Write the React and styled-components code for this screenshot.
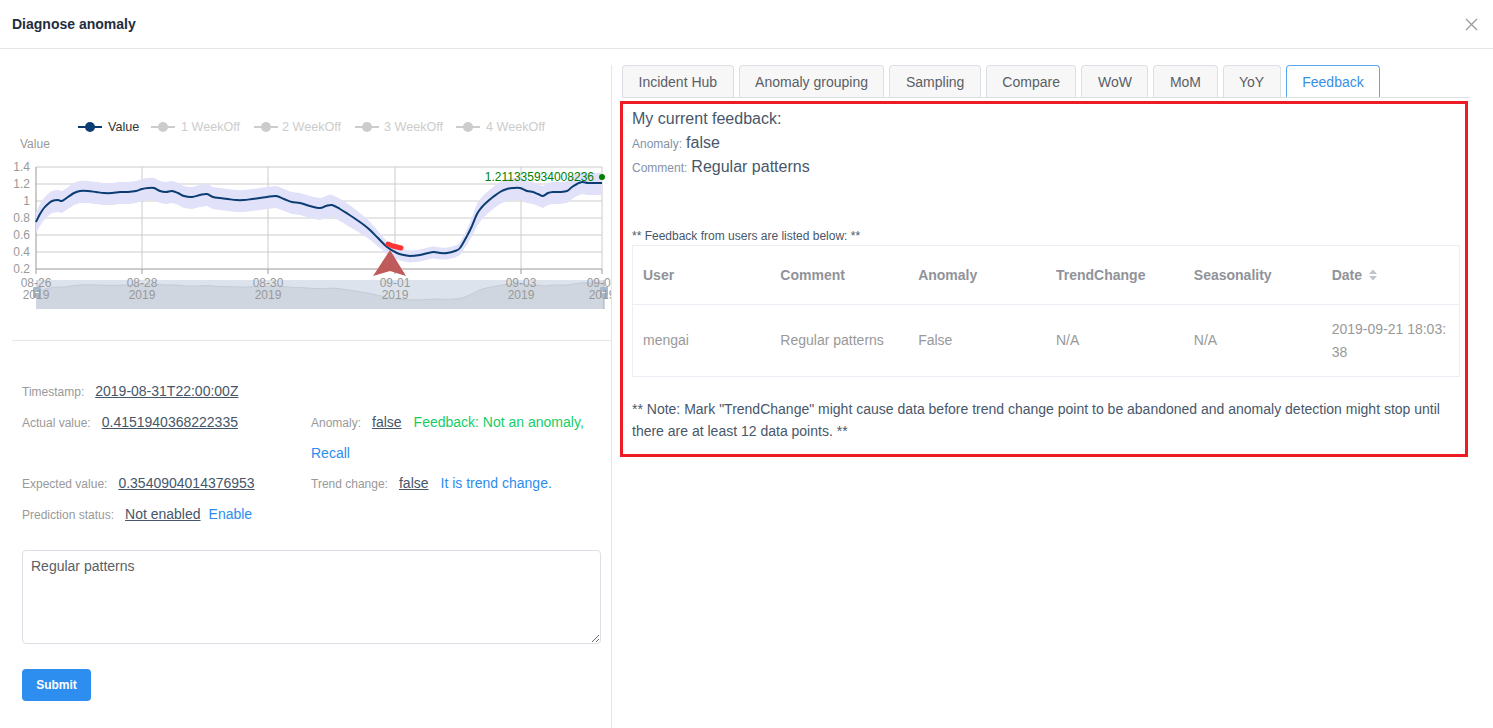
import React from 'react';
import styled, { createGlobalStyle } from 'styled-components';

const GlobalStyle = createGlobalStyle`
  body {
    margin: 0;
    background: #fff;
    font-family: "Liberation Sans", Arial, sans-serif;
  }
`;

const Dialog = styled.div`
  width: 1493px;
  height: 728px;
  overflow: hidden;
  background: #fff;
`;

const Header = styled.div`
  height: 48px;
  display: flex;
  align-items: center;
  justify-content: space-between;
  padding: 0 15px 0 12px;
  border-bottom: 1px solid #e6e6e6;
`;

const Title = styled.span`
  font-size: 14px;
  font-weight: 700;
  color: #1f2d3d;
`;

const Body = styled.div`
  display: grid;
  grid-template-columns: 611px 1fr;
  padding-top: 16px;
  height: 663px;
`;

const LeftPane = styled.div`
  display: flex;
  flex-direction: column;
`;

const ChartBox = styled.div`
  margin-top: 40px;
  height: 210px;
  svg {
    display: block;
  }
`;

const Divider = styled.div`
  margin: 25px 0 0 12px;
  height: 1px;
  background: #e6e6e6;
`;

const InfoGrid = styled.div`
  margin-top: 35px;
  padding-left: 22px;
  display: grid;
  grid-template-columns: 289px 290px;
  align-items: start;
  line-height: 30.75px;
`;

const Cell = styled.div`
  font-size: 14px;
  line-height: 30.75px;
`;

const Label = styled.span`
  font-size: 12px;
  line-height: 1;
  color: #999;
  margin-right: 11px;
`;

const Value = styled.span`
  color: #475669;
  text-decoration: underline;
  margin-right: ${(p) => p.$gap || 12}px;
`;

const Hint = styled.span`
  color: ${(p) => (p.$tone === 'green' ? '#13ce66' : '#2d8cf0')};
`;

const Comment = styled.textarea`
  margin: 20px 0 0 22px;
  width: 579px;
  height: 94px;
  box-sizing: border-box;
  padding: 6px 8px;
  border: 1px solid #dcdfe6;
  border-radius: 4px;
  font-family: "Liberation Sans", Arial, sans-serif;
  font-size: 14px;
  line-height: 18px;
  color: #5a5e66;
  resize: vertical;
  outline: none;
`;

const SubmitButton = styled.button`
  margin: 25px 0 0 22px;
  width: 69px;
  height: 32px;
  border: none;
  border-radius: 4px;
  background: #2e8ef0;
  color: #fff;
  font-family: "Liberation Sans", Arial, sans-serif;
  font-size: 12px;
  font-weight: 700;
`;

const RightPane = styled.div`
  border-left: 1px solid #e6e6e6;
  padding: 0 23px 0 10px;
`;

const TabBar = styled.div`
  display: flex;
  align-items: flex-end;
  gap: 5px;
  border-bottom: 1px solid #dcdfe6;
`;

const Tab = styled.div`
  height: 31px;
  padding: 0 15.5px;
  display: flex;
  align-items: center;
  border: 1px solid ${(p) => (p.$active ? '#5aa6f2' : '#dcdfe6')};
  border-bottom: none;
  border-radius: 4px 4px 0 0;
  background: ${(p) => (p.$active ? '#fff' : '#f7f7f7')};
  color: ${(p) => (p.$active ? '#3a8ee6' : '#5a5e66')};
  font-size: 14px;
`;

const FeedbackBox = styled.div`
  margin: 3px 0 0 -2px;
  width: 848px;
  box-sizing: border-box;
  border: 3px solid #ed1c24;
  padding: 3px 5px 12px 9px;
`;

const Current = styled.div`
  font-size: 16px;
  line-height: 24px;
  color: #48576a;
`;

const SmallLabel = styled.span`
  font-size: 12px;
  line-height: 1;
  color: #8492a6;
  margin-right: 4px;
`;

const ListCaption = styled.div`
  margin-top: 48px;
  font-size: 12px;
  line-height: 18px;
  color: #48576a;
`;

const Table = styled.table`
  width: 828px;
  border-collapse: collapse;
  table-layout: fixed;
  border: 1px solid #ebeef5;
  font-size: 14px;
`;

const Th = styled.th`
  height: 58px;
  padding: 0 10px;
  text-align: left;
  font-weight: 700;
  color: #909399;
  border-bottom: 1px solid #ebeef5;
`;

const Td = styled.td`
  height: 71px;
  padding: 0 10px;
  color: #999;
  line-height: 23px;
  word-break: break-all;
`;

const Note = styled.div`
  margin-top: 21px;
  font-size: 14px;
  line-height: 22px;
  color: #48576a;
`;

const tabs = ['Incident Hub', 'Anomaly grouping', 'Sampling', 'Compare', 'WoW', 'MoM', 'YoY', 'Feedback'];

const pts = [
  [36, 222], [40, 214], [44, 208], [48, 204], [52, 201], [58, 200], [62, 201], [68, 197], [74, 193], [80, 191],
  [88, 191], [96, 192], [104, 193], [112, 193], [120, 192], [128, 192], [136, 191], [142, 189], [148, 188], [154, 188],
  [160, 191], [166, 192], [172, 191], [178, 193], [184, 196], [192, 197], [200, 195], [207, 194], [213, 197], [220, 198],
  [228, 199], [236, 200], [244, 200], [252, 199], [260, 198], [267, 197], [276, 196], [284, 199], [292, 202], [300, 203],
  [310, 206], [320, 208], [326, 206], [332, 205], [340, 209], [348, 214], [357, 220], [364, 225], [370, 230], [378, 238],
  [387, 247], [397, 253], [404, 255], [410, 256], [420, 255], [433, 252], [440, 253], [447, 253], [455, 251], [460, 248],
  [467, 236], [472, 226], [477, 214], [482, 207], [487, 202], [493, 197], [500, 192], [507, 189], [513, 188], [520, 188],
  [527, 191], [533, 192], [538, 194], [543, 196], [548, 193], [553, 192], [560, 192], [567, 191], [572, 187], [577, 184],
  [582, 182], [588, 183], [595, 183], [602, 183],
];

// catmull-rom -> cubic bezier
const smooth = (p) =>
  p.reduce((d, [x, y], i) => {
    if (i === 0) return `M${x},${y}`;
    const p0 = p[i - 2] || p[i - 1];
    const p1 = p[i - 1];
    const p3 = p[i + 1] || [x, y];
    const c1 = [p1[0] + (x - p0[0]) / 6, p1[1] + (y - p0[1]) / 6];
    const c2 = [x - (p3[0] - p1[0]) / 6, y - (p3[1] - p1[1]) / 6];
    return `${d} C${c1[0]},${c1[1]} ${c2[0]},${c2[1]} ${x},${y}`;
  }, '');

const shrink = (y) => 1 - 0.45 * Math.min(1, Math.max(0, (y - 215) / 35));
const upper = pts.map(([x, y]) => [x, y - 10 * shrink(y)]);
const lower = pts.map(([x, y]) => [x, y + 12 * shrink(y)]);
const bandPath = `${smooth(upper)} L${[...lower].reverse().map((q) => q.join(',')).join(' L')} Z`;

const shadow = pts.map(([x, y]) => [x + 2, 283 + ((y - 183) / 73) * 17]);
const shadowLine = shadow.map((q) => q.join(',')).join(' ');

const yTicks = [1.4, 1.2, 1, 0.8, 0.6, 0.4, 0.2];
const xTicks = [
  [36, '08-26'], [142, '08-28'], [268, '08-30'], [395, '09-01'], [521, '09-03'], [602, '09-04'],
];
const legend = [
  [90, 108, 'Value', true], [163, 181, '1 WeekOff'], [266, 282, '2 WeekOff'], [367, 384, '3 WeekOff'], [468, 486, '4 WeekOff'],
];

const Chart = () => (
  <svg width="611" height="210" viewBox="0 105 611 210" fontFamily="Liberation Sans, Arial, sans-serif" fontSize="12">
    {legend.map(([cx, tx, name, on]) => (
      <g key={name}>
        <line x1={cx - 12} y1="127" x2={cx + 12} y2="127" stroke={on ? '#0b3d73' : '#ccc'} strokeWidth="2" />
        <circle cx={cx} cy="127" r="5" fill={on ? '#0b3d73' : '#ccc'} />
        <text x={tx} y="131" fontSize="12.6" fill={on ? '#333' : '#ccc'}>{name}</text>
      </g>
    ))}
    <text x="20" y="148" fill="#999">Value</text>
    {yTicks.map((v, i) => (
      <g key={v}>
        <line x1="36" x2="602" y1={167 + i * 17} y2={167 + i * 17} stroke={i === 6 ? '#999' : '#ccc'} />
        <text x="30" y={171 + i * 17} fill="#999" textAnchor="end">{v}</text>
      </g>
    ))}
    {xTicks.map(([x]) => (
      <g key={x}>
        <line x1={x} x2={x} y1="167" y2="269" stroke={x === 36 ? '#999' : '#ccc'} />
        <line x1={x} x2={x} y1="269" y2="274" stroke="#999" />
      </g>
    ))}
    <path d={bandPath} fill="#e1e1fa" />
    <path d={smooth(pts)} fill="none" stroke="#0b3d73" strokeWidth="2" />
    <path d="M388,244 L393,246 L401,248" fill="none" stroke="#f33" strokeWidth="5" strokeLinecap="round" />
    <polygon points="390,250 406,276 390,271 373,276" fill="#bf5b5a" />
    <text x="594" y="181" fill="#008000" textAnchor="end">1.211335934008236</text>
    <circle cx="602" cy="177" r="3" fill="#008000" />
    <rect x="38" y="280" width="566" height="29" fill="#dde3ec" />
    <polygon points={`38,309 ${shadowLine} 604,309`} fill="#cfd6e0" />
    <polyline points={shadowLine} fill="none" stroke="#c3cbd6" />
    {[37, 604].map((x) => (
      <g key={x}>
        <line x1={x} x2={x} y1="280" y2="309" stroke="#9fb0c8" />
        <rect x={x - 4} y="287" width="8" height="11" rx="1" fill="#a7b7cc" />
        <line x1={x - 2} x2={x + 2} y1="292.5" y2="292.5" stroke="#fff" />
      </g>
    ))}
    {xTicks.map(([x, label]) => (
      <g key={label} fill="#999" textAnchor="middle">
        <text x={x} y="287">{label}</text>
        <text x={x} y="299">2019</text>
      </g>
    ))}
  </svg>
);

const CloseIcon = () => (
  <svg width="13" height="13" viewBox="0 0 13 13">
    <path d="M1,1 L12,12 M12,1 L1,12" stroke="#999" strokeWidth="1.2" />
  </svg>
);

const SortCaret = () => (
  <svg width="10" height="14" viewBox="0 0 10 14" style={{ marginLeft: 6, verticalAlign: -2 }}>
    <path d="M1,6 L5,1.5 L9,6 Z M1,8 L5,12.5 L9,8 Z" fill="#c0c4cc" />
  </svg>
);

const App = () => (
  <Dialog>
    <GlobalStyle />
    <Header>
      <Title>Diagnose anomaly</Title>
      <CloseIcon />
    </Header>
    <Body>
      <LeftPane>
        <ChartBox>
          <Chart />
        </ChartBox>
        <Divider />
        <InfoGrid>
          <Cell>
            <Label>Timestamp:</Label>
            <Value>2019-08-31T22:00:00Z</Value>
          </Cell>
          <Cell />
          <Cell>
            <Label>Actual value:</Label>
            <Value>0.4151940368222335</Value>
          </Cell>
          <Cell>
            <Label>Anomaly:</Label>
            <Value>false</Value>
            <Hint $tone="green">Feedback: Not an anomaly,</Hint> <Hint>Recall</Hint>
          </Cell>
          <Cell>
            <Label>Expected value:</Label>
            <Value>0.3540904014376953</Value>
          </Cell>
          <Cell>
            <Label>Trend change:</Label>
            <Value>false</Value>
            <Hint>It is trend change.</Hint>
          </Cell>
          <Cell>
            <Label>Prediction status:</Label>
            <Value $gap={8}>Not enabled</Value>
            <Hint>Enable</Hint>
          </Cell>
          <Cell />
        </InfoGrid>
        <Comment defaultValue="Regular patterns" />
        <div>
          <SubmitButton type="button">Submit</SubmitButton>
        </div>
      </LeftPane>
      <RightPane>
        <TabBar>
          {tabs.map((t) => (
            <Tab key={t} $active={t === 'Feedback'}>{t}</Tab>
          ))}
        </TabBar>
        <FeedbackBox>
          <Current>My current feedback:</Current>
          <Current>
            <SmallLabel>Anomaly:</SmallLabel>false
          </Current>
          <Current>
            <SmallLabel>Comment:</SmallLabel>Regular patterns
          </Current>
          <ListCaption>** Feedback from users are listed below: **</ListCaption>
          <Table>
            <thead>
              <tr>
                <Th>User</Th>
                <Th>Comment</Th>
                <Th>Anomaly</Th>
                <Th>TrendChange</Th>
                <Th>Seasonality</Th>
                <Th>
                  Date
                  <SortCaret />
                </Th>
              </tr>
            </thead>
            <tbody>
              <tr>
                <Td>mengai</Td>
                <Td>Regular patterns</Td>
                <Td>False</Td>
                <Td>N/A</Td>
                <Td>N/A</Td>
                <Td>2019-09-21 18:03:38</Td>
              </tr>
            </tbody>
          </Table>
          <Note>
            ** Note: Mark "TrendChange" might cause data before trend change point to be abandoned and anomaly
            detection might stop until there are at least 12 data points. **
          </Note>
        </FeedbackBox>
      </RightPane>
    </Body>
  </Dialog>
);

export default App;
